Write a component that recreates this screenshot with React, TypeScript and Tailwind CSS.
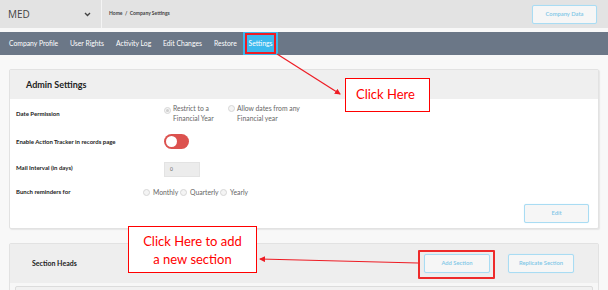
import React from "react";

function Radio({ checked = false }: { checked?: boolean }) {
  return (
    <span className="inline-flex w-[7px] h-[7px] rounded-full border border-[#d6d6d6] bg-[#f4f4f4] items-center justify-center shrink-0">
      {checked && <span className="w-[3px] h-[3px] rounded-full bg-[#cfcfcf]" />}
    </span>
  );
}

function LightBtn({ label, w }: { label: string; w: string }) {
  return (
    <div
      className={`${w} h-[19px] border border-[#a9dcf3] rounded-[2px] bg-[#f6f6f6] flex items-center justify-center text-[5.8px] font-semibold text-[#7fc6e6] shadow-[0_0_1px_#bfe6f7]`}
    >
      {label}
    </div>
  );
}

export default function App() {
  const nav = [
    { t: "Company Profile", w: "w-[61px]" },
    { t: "User Rights", w: "w-[46px]" },
    { t: "Activity Log", w: "w-[47px]" },
    { t: "Edit Changes", w: "w-[51px]" },
    { t: "Restore", w: "w-[29px]" },
  ];
  return (
    <div
      className="relative w-[608px] h-[290px] overflow-hidden bg-[#f8f8f8]"
      style={{ fontFamily: '"Lato", "Open Sans", sans-serif' }}
    >
      {/* top bar */}
      <div className="h-[28px] bg-[#e3e3e3] flex items-center">
        <div className="w-[102px] h-full border-r border-[#f4f4f4] flex items-center justify-between pl-[8px] pr-[10px]">
          <span className="text-[10px] text-[#444]" style={{ fontFamily: '"Open Sans", sans-serif' }}>MED</span>
          <svg width="7" height="5" viewBox="0 0 7 5">
            <path d="M1 1 L3.5 3.5 L6 1" stroke="#444" strokeWidth="1.4" fill="none" />
          </svg>
        </div>
        <div className="pl-[7px] text-[5px] text-[#444] font-bold">Home&nbsp;&nbsp;/&nbsp;&nbsp;Company Settings</div>
        <div className="ml-auto mr-[11px]">
          <LightBtn label="Company Data" w="w-[65px]" />
        </div>
      </div>

      {/* nav */}
      <div className="mt-[4px] h-[23px] bg-[#6b7787] flex items-stretch pl-[9px] text-white text-[6.8px]">
        {nav.map((n) => (
          <div key={n.t} className={`${n.w} flex items-center`}>
            {n.t}
          </div>
        ))}
        <div className="relative w-[35px] bg-[#3cb9ee] flex items-center justify-center">
          Settings
          <div className="absolute left-[2px] right-[2px] top-[1px] bottom-[1px] border-2 border-[#ee1c24]" />
        </div>
      </div>

      {/* Admin settings card */}
      <div className="mx-[9px] mt-[14px] h-[160px] border border-[#e2e2e2] rounded-[2px] bg-white flex flex-col shadow-[1px_1px_1px_#e6e6e6]">
        <div className="h-[29px] bg-[#efefef] flex items-center pl-[16px] text-[9px] font-bold text-[#222]">
          Admin Settings
        </div>
        <div className="flex-1 flex flex-col pl-[6px] text-[6px] text-[#222]">
          <div className="mt-[4px] h-[20px] flex items-center">
            <div className="w-[148px] font-bold">Date Permission</div>
            <div className="flex items-start text-[#666] text-[6.8px] leading-[10px]">
              <div className="w-[64px] flex items-start gap-[2px]">
                <span className="mt-[1px]"><Radio checked /></span>
                <div>
                  Restrict to a
                  <br />
                  Financial Year
                </div>
              </div>
              <div className="flex items-start gap-[2px]">
                <span className="mt-[1px]"><Radio /></span>
                <div>
                  Allow dates from any
                  <br />
                  Financial year
                </div>
              </div>
            </div>
          </div>
          <div className="mt-[11px] h-[15px] flex items-center">
            <div className="w-[148px] font-bold">Enable Action Tracker in records page</div>
            <div className="w-[25px] h-[15px] rounded-full bg-[#dc524f] flex items-center pl-[2px]">
              <div className="w-[11px] h-[11px] rounded-full bg-white" />
            </div>
          </div>
          <div className="mt-[13px] h-[15px] flex items-start">
            <div className="w-[148px] font-bold mt-[1px]">Mail Interval (in days)</div>
            <div className="w-[36px] h-[15px] bg-[#ececec] border border-[#e3e3e3] flex items-center pl-[5px] text-[5px] text-[#666]">
              0
            </div>
          </div>
          <div className="mt-[9px] h-[10px] flex items-center">
            <div className="w-[127px] font-bold">Bunch reminders for</div>
            <div className="flex items-center text-[#666] text-[6.8px] mt-[3px]">
              <Radio />
              <span className="ml-[3px] w-[27px]">Monthly</span>
              <Radio />
              <span className="ml-[3px] w-[30px]">Quarterly</span>
              <Radio />
              <span className="ml-[3px]">Yearly</span>
            </div>
          </div>
          <div className="mt-auto mb-[5px] flex justify-end pr-[9px]">
            <LightBtn label="Edit" w="w-[65px]" />
          </div>
        </div>
      </div>

      {/* Section heads card */}
      <div className="mx-[9px] mt-[14px] h-[60px] border border-[#e2e2e2] rounded-[2px] bg-[#f7f7f7] flex flex-col">
        <div className="h-[39px] bg-[#eeeeee] flex items-center pl-[22px] pr-[24px]">
          <span className="text-[7px] font-bold text-[#222]">Section Heads</span>
          <div className="ml-auto flex items-center gap-[18px]">
            <div className="relative">
              <LightBtn label="Add Section" w="w-[66px]" />
              <div className="absolute -left-[6px] -right-[5px] -top-[4px] -bottom-[6px] border-2 border-[#ee2a2a] rounded-[1px]" />
            </div>
            <LightBtn label="Replicate Section" w="w-[66px]" />
          </div>
        </div>
        <div className="mx-[5px] mt-[3px] flex-1 border border-[#dcdcdc] bg-[#f1f1f1] rounded-t-[2px]" />
      </div>

      {/* annotations */}
      <div className="absolute left-[345px] top-[78px] w-[85px] h-[34px] border border-[#ff0000] bg-white flex items-center pl-[10px] text-[13px] text-[#ff0000]">
        Click Here
      </div>
      <div className="absolute left-[128px] top-[226px] w-[129px] h-[47px] border border-[#ff0000] bg-white flex items-center justify-center text-center text-[13px] leading-[18px] text-[#ff0000]">
        Click Here to add
        <br />
        a new section
      </div>
      <svg className="absolute left-0 top-0 pointer-events-none" width="608" height="290" viewBox="0 0 608 290">
        <defs>
          <marker id="ah" markerWidth="6" markerHeight="6" refX="5" refY="3" orient="auto" markerUnits="userSpaceOnUse">
            <path d="M0 0 L6 3 L0 6 z" fill="#ee1c24" />
          </marker>
        </defs>
        <line x1="277" y1="54" x2="340" y2="94" stroke="#ee1c24" strokeWidth="1.2" markerEnd="url(#ah)" />
        <line x1="418" y1="263" x2="260" y2="259" stroke="#ee1c24" strokeWidth="1.2" markerEnd="url(#ah)" />
      </svg>
    </div>
  );
}
